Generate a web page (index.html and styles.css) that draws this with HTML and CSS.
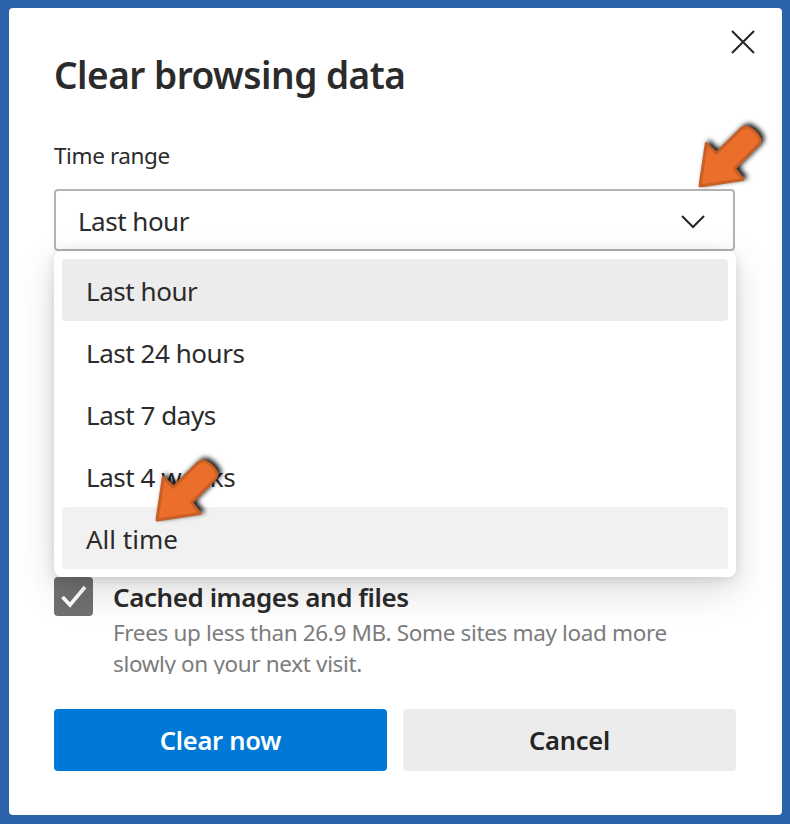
FILE: index.html
```html
<!DOCTYPE html>
<html lang="en">
<head>
<meta charset="utf-8">
<title>Clear browsing data</title>
<link rel="stylesheet" href="styles.css">
</head>
<body>
<main class="dialog">
  <button class="close" aria-label="Close">
    <svg width="26" height="26" viewBox="0 0 26 26"><path d="M2 2L24 24M24 2L2 24"/></svg>
  </button>
  <h1 class="title">Clear browsing data</h1>
  <div class="label">Time range</div>
  <div class="field">
    <div class="select">
      <span>Last hour</span>
      <svg class="chevron" width="26" height="16" viewBox="0 0 26 16"><path d="M2 2L13 13L24 2"/></svg>
    </div>
    <ul class="menu">
      <li class="item selected">Last hour</li>
      <li class="item">Last 24 hours</li>
      <li class="item">Last 7 days</li>
      <li class="item">Last 4 weeks</li>
      <li class="item hover">All time</li>
    </ul>
  </div>
  <div class="choice">
    <span class="checkbox"><svg width="39" height="39" viewBox="0 0 39 39"><path d="M8.5 20L16 28L31 10"/></svg></span>
    <div class="choice-text">
      <div class="choice-title">Cached images and files</div>
      <div class="choice-note">Frees up less than 26.9 MB. Some sites may load more<br>slowly on your next visit.</div>
    </div>
  </div>
  <div class="actions">
    <button class="btn primary">Clear now</button>
    <button class="btn">Cancel</button>
  </div>
  <svg class="arrow arrow-select" width="90" height="90" viewBox="0 0 90 90"><path d="M10 70L16.3 27.5L26.5 37.3L49.5 14.5Q54 9.5 58.5 11.5Q66 15 69.5 22.5Q71 26 68 29L44.5 52.5L53 63.5Z"/></svg>
  <svg class="arrow arrow-item" width="90" height="90" viewBox="0 0 90 90"><path d="M10 70L16.3 27.5L26.5 37.3L49.5 14.5Q54 9.5 58.5 11.5Q66 15 69.5 22.5Q71 26 68 29L44.5 52.5L53 63.5Z"/></svg>
</main>
</body>
</html>
```
FILE: styles.css
```css
* { box-sizing: border-box; }
body {
  margin: 0;
  height: 824px;
  padding: 8px 8px 9px;
  background: #2b62aa;
  font-family: "Noto Sans", "Open Sans", sans-serif;
  color: #2b2b2b;
  overflow: hidden;
}
.dialog {
  position: relative;
  width: 773px;
  height: 807px;
  margin-left: 1px;
  padding: 42px 45px 0;
  border-radius: 4px;
  background: #fff;
  overflow: hidden;
}
.close {
  position: absolute;
  top: 21px;
  right: 26px;
  width: 26px;
  height: 26px;
  padding: 0;
  border: 0;
  background: none;
}
svg { display: block; fill: none; stroke: #242424; stroke-width: 2; }
.title { margin: 0; height: 50px; font-size: 37px; line-height: 49px; font-weight: 600; letter-spacing: -.5px; white-space: nowrap; }
.label { height: 32px; margin-top: 40px; font-size: 22.5px; line-height: 32px; letter-spacing: -.4px; }
.field { position: relative; margin-top: 17px; }
.select {
  display: flex;
  align-items: center;
  justify-content: space-between;
  width: 681px;
  height: 62px;
  padding: 1px 27px 0 22px;
  border: 2px solid #b3b3b3;
  border-radius: 4px;
  font-size: 26px;
  letter-spacing: -.5px;
}
.chevron { margin-top: 2px; }
.menu {
  position: absolute;
  z-index: 1;
  top: 62px;
  left: 0;
  width: 682px;
  height: 326px;
  margin: 0;
  padding: 8px;
  list-style: none;
  border-radius: 8px;
  background: #fff;
  box-shadow: 0 13px 38px rgba(0,0,0,.15), 0 2px 12px rgba(0,0,0,.12);
}
.item { height: 62px; padding-left: 24px; border-radius: 4px; font-size: 26px; line-height: 64px; letter-spacing: -.45px; }
.selected { background: #ececec; }
.hover { background: #f1f1f1; letter-spacing: 0; }
.choice { display: flex; gap: 20px; height: 97px; margin-top: 326px; overflow: hidden; }
.checkbox { width: 39px; height: 39px; border-radius: 4px; background: #707070; }
.checkbox path { stroke: #fff; stroke-width: 3.6; }
.choice-title { height: 40px; font-size: 26px; line-height: 40px; font-weight: 600; letter-spacing: -.43px; }
.choice-note { font-size: 22.5px; line-height: 31px; letter-spacing: -.35px; color: #7c7c7c; white-space: nowrap; }
.actions { display: flex; gap: 16px; width: 682px; margin-top: 35px; }
.btn {
  flex: 1;
  height: 62px;
  padding: 0;
  border: 0;
  border-radius: 4px;
  background: #ececec;
  color: #242424;
  font: 600 25.5px "Noto Sans", "Open Sans", sans-serif;
  letter-spacing: -.25px;
}
.primary { background: #0078d7; color: #fff; }
.arrow { position: absolute; z-index: 2; filter: drop-shadow(3px -2px 2.5px rgba(0,0,0,.9)); }
.arrow path { fill: #eb6f2b; stroke: #c85f27; stroke-width: 3; stroke-linejoin: round; }
.arrow-select { left: 681px; top: 108px; }
.arrow-item { left: 138px; top: 442px; }
```
